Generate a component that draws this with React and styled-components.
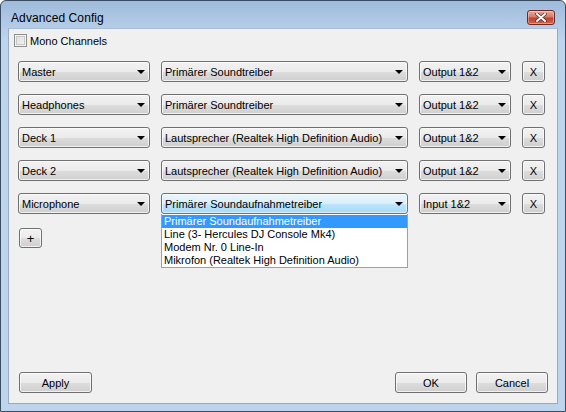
import React from "react";
import styled, { createGlobalStyle, css } from "styled-components";

const GlobalStyle = createGlobalStyle`
  body {
    margin: 0;
    background: #ffffff;
    font-family: "Liberation Sans", Arial, sans-serif;
  }
`;

const rows = [
  { channel: "Master", device: "Primärer Soundtreiber", port: "Output 1&2" },
  { channel: "Headphones", device: "Primärer Soundtreiber", port: "Output 1&2" },
  { channel: "Deck 1", device: "Lautsprecher (Realtek High Definition Audio)", port: "Output 1&2" },
  { channel: "Deck 2", device: "Lautsprecher (Realtek High Definition Audio)", port: "Output 1&2" },
  { channel: "Microphone", device: "Primärer Soundaufnahmetreiber", port: "Input 1&2", open: true },
];

const options = [
  "Primärer Soundaufnahmetreiber",
  "Line (3- Hercules DJ Console Mk4)",
  "Modem Nr. 0 Line-In",
  "Mikrofon (Realtek High Definition Audio)",
];

const Window = styled.div`
  box-sizing: border-box;
  width: 566px;
  height: 412px;
  border: 1px solid #3b4d63;
  border-radius: 6px 6px 0 0;
  background: linear-gradient(to bottom, #9fbbdb 0px, #b4cce8 26px, #bed5ee 40px, #bdd4ec 100%);
  display: flex;
  flex-direction: column;
  overflow: hidden;
`;

const TitleBar = styled.div`
  height: 27px;
  display: flex;
  justify-content: space-between;
  align-items: flex-start;
  padding: 0 10px 0 10px;
  flex-shrink: 0;
`;

const Title = styled.div`
  font-size: 12px;
  color: #000;
  padding-top: 10px;
  letter-spacing: 0.1px;
`;

const CloseButton = styled.div`
  box-sizing: border-box;
  width: 28px;
  height: 15px;
  margin-top: 9px;
  border: 1px solid #6d2a22;
  border-radius: 3px;
  background: linear-gradient(to bottom, #e9a99c 0%, #d47a6a 45%, #c2412c 55%, #d0654f 100%);
  box-shadow: inset 0 0 0 1px rgba(255, 255, 255, 0.35);
  display: flex;
  align-items: center;
  justify-content: center;
`;

const Client = styled.div`
  box-sizing: border-box;
  margin: 0 7px 7px 7px;
  flex: 1;
  background: #f0f0f0;
  border: 1px solid #95abc6;
  border-top-color: #a9bfd8;
  display: flex;
  flex-direction: column;
  padding: 5px 9px 10px 9px;
`;

const CheckRow = styled.label`
  display: flex;
  align-items: center;
  gap: 3px;
  font-size: 11px;
  color: #000;
  margin-left: -4px;
`;

const CheckBox = styled.span`
  box-sizing: border-box;
  width: 13px;
  height: 13px;
  border: 1px solid #8e8f8f;
  background: linear-gradient(135deg, #dcdcdc 0%, #f4f4f4 100%);
  box-shadow: inset 0 0 0 1px #f4f4f4, inset 0 0 0 2px #c8c8c8;
`;

const Rows = styled.div`
  display: flex;
  flex-direction: column;
  gap: 12px;
  margin-top: 14px;
`;

const Row = styled.div`
  display: flex;
  align-items: center;
  gap: 11px;
`;

const greyFace = css`
  border: 1px solid #707070;
  border-radius: 3px;
  background: linear-gradient(to bottom, #f2f2f2 0%, #ebebeb 50%, #dddddd 51%, #cfcfcf 100%);
  box-shadow: inset 0 0 0 1px rgba(255, 255, 255, 0.7);
`;

const blueFace = css`
  border: 1px solid #3c7fb1;
  border-radius: 3px;
  background: linear-gradient(to bottom, #eaf6fd 0%, #d9f0fc 50%, #bee6fd 51%, #a7d9f5 100%);
  box-shadow: inset 0 0 0 1px rgba(255, 255, 255, 0.6);
`;

const Combo = styled.div`
  position: relative;
  box-sizing: border-box;
  width: ${(p) => p.$w}px;
  height: 21px;
  ${(p) => (p.$focus ? blueFace : greyFace)}
  display: flex;
  align-items: center;
  justify-content: space-between;
  padding: 0 4px 0 3px;
  font-size: 11px;
  color: #000;
  flex-shrink: 0;
`;

const Arrow = styled.span`
  width: 0;
  height: 0;
  border-left: 4px solid transparent;
  border-right: 4px solid transparent;
  border-top: 4px solid #000;
  margin-top: 1px;
`;

const DropList = styled.div`
  position: absolute;
  top: 20px;
  left: -1px;
  right: -1px;
  box-sizing: border-box;
  background: #ffffff;
  border: 1px solid #8aa4be;
  border-top: none;
  padding-top: 1px;
  z-index: 2;
`;

const Option = styled.div`
  height: 13px;
  line-height: 13px;
  padding-left: 2px;
  font-size: 11px;
  color: ${(p) => (p.$active ? "#ffffff" : "#000000")};
  background: ${(p) => (p.$active ? "#3399ff" : "transparent")};
  white-space: nowrap;
`;

const Button = styled.div`
  box-sizing: border-box;
  width: ${(p) => p.$w}px;
  height: ${(p) => p.$h || 21}px;
  ${greyFace}
  display: flex;
  align-items: center;
  justify-content: center;
  font-size: ${(p) => p.$fs || 11}px;
  color: #000;
  flex-shrink: 0;
`;

const AddWrap = styled.div`
  margin-top: 14px;
  margin-left: 1px;
`;

const Footer = styled.div`
  margin-top: auto;
  display: flex;
  align-items: center;
  margin-left: 1px;
`;

const FooterRight = styled.div`
  margin-left: auto;
  display: flex;
  gap: 9px;
`;

export default function App() {
  return (
    <>
      <GlobalStyle />
      <Window>
        <TitleBar>
          <Title>Advanced Config</Title>
          <CloseButton>
            <svg width="12" height="9" viewBox="0 0 12 9">
              <path d="M2 1 L10 8 M10 1 L2 8" stroke="#4a2a26" strokeWidth="3.4" strokeLinecap="round" />
              <path d="M2 1 L10 8 M10 1 L2 8" stroke="#ffffff" strokeWidth="2" strokeLinecap="round" />
            </svg>
          </CloseButton>
        </TitleBar>
        <Client>
          <CheckRow>
            <CheckBox />
            Mono Channels
          </CheckRow>
          <Rows>
            {rows.map((r) => (
              <Row key={r.channel}>
                <Combo $w={132}>
                  <span>{r.channel}</span>
                  <Arrow />
                </Combo>
                <Combo $w={247} $focus={r.open}>
                  <span>{r.device}</span>
                  <Arrow />
                  {r.open && (
                    <DropList>
                      {options.map((o, i) => (
                        <Option key={o} $active={i === 0}>{o}</Option>
                      ))}
                    </DropList>
                  )}
                </Combo>
                <Combo $w={92}>
                  <span>{r.port}</span>
                  <Arrow />
                </Combo>
                <Button $w={23}>X</Button>
              </Row>
            ))}
          </Rows>
          <AddWrap>
            <Button $w={23} $h={20} $fs={13}>+</Button>
          </AddWrap>
          <Footer>
            <Button $w={73}>Apply</Button>
            <FooterRight>
              <Button $w={72}>OK</Button>
              <Button $w={72}>Cancel</Button>
            </FooterRight>
          </Footer>
        </Client>
      </Window>
    </>
  );
}
